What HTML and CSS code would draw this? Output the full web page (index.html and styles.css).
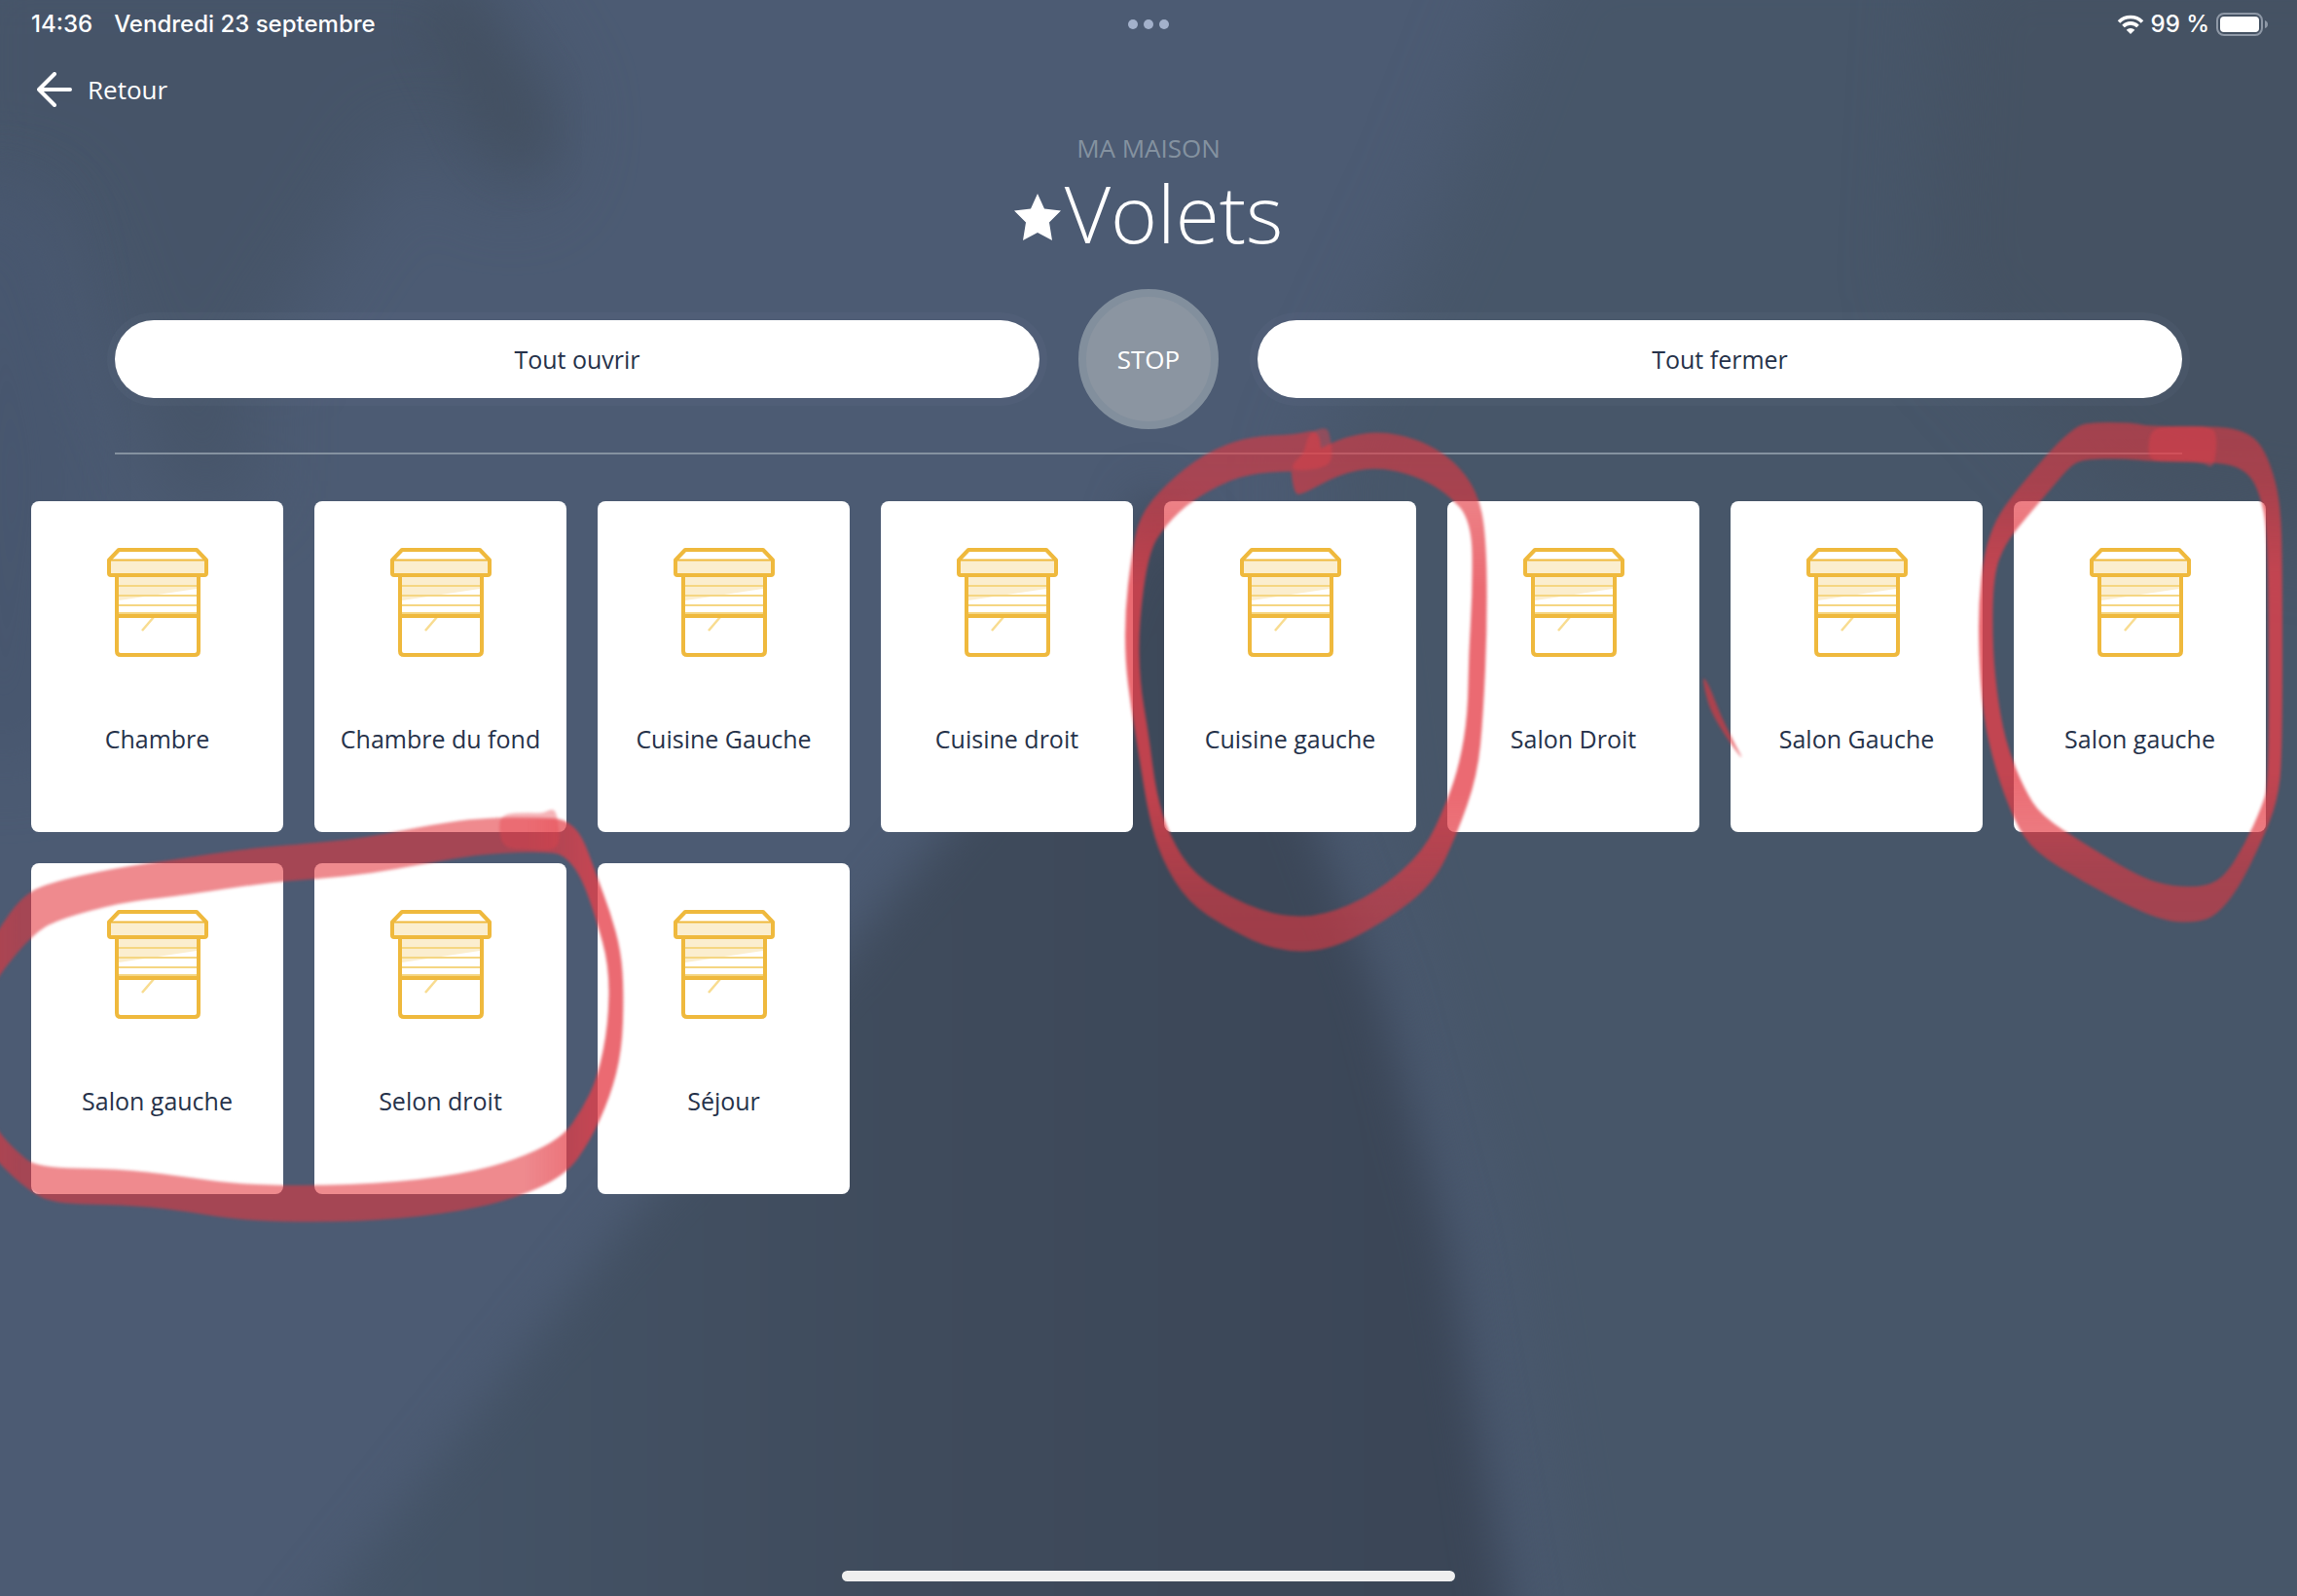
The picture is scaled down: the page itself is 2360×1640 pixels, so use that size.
FILE: index.html
```html
<!DOCTYPE html>
<html lang="fr">
<head>
    <meta charset="UTF-8">
    <meta name="viewport" content="width=device-width, initial-scale=1.0">
    <title>Volets</title>
    <link rel="stylesheet" href="styles.css">
</head>
<body>
<svg class="backdrop" viewBox="0 0 2360 1640" preserveAspectRatio="none" aria-hidden="true">
    <defs>
        <linearGradient id="bodyShade" x1="0" y1="0" x2="1" y2="0">
            <stop offset="0" stop-color="#46566a"/>
            <stop offset="0.5" stop-color="#3f4b5c"/>
            <stop offset="1" stop-color="#3a4556"/>
        </linearGradient>
        <filter id="soft" x="-20%" y="-20%" width="140%" height="140%" color-interpolation-filters="sRGB"><feGaussianBlur stdDeviation="24"/></filter>
        <filter id="softer" x="-30%" y="-30%" width="160%" height="160%" color-interpolation-filters="sRGB"><feGaussianBlur stdDeviation="40"/></filter>
    </defs>
    <rect width="2360" height="1640" fill="#4c5b73"/>
    <path d="M1590-80L2460-80V1720H1600L1520 1240 1400 860 1350 480 1480 200z" fill="#475669" filter="url(#softer)"/>
    <path d="M2000-60H2460V560L2180 520 1980 300z" fill="#455263" filter="url(#softer)"/>
    <path d="M-60-60H480L580 110 560 200 500 200 420 130 260 380 260 520 180 520 60 200 -60 180z" fill="#455366" opacity=".8" filter="url(#softer)"/>
    <path d="M470-20L560 100 570 160 540 180 500 150 430 10z" fill="#424e5e" opacity=".6" filter="url(#soft)"/>
    <path d="M-60 200H40L90 480 60 780H-60z" fill="#43526a" opacity=".5" filter="url(#softer)"/>
    <path d="M990 830L1130 640 1180 500 1280 620 1350 840 1420 1020 1490 1280 1560 1700H290L640 1260z" fill="url(#bodyShade)" filter="url(#soft)"/>
</svg>

<header class="status-bar">
    <div class="status-left">
        <span>14:36</span>
        <span>Vendredi 23 septembre</span>
    </div>
    <div class="dots"><i></i><i></i><i></i></div>
    <div class="status-right">
        <svg width="28" height="20" viewBox="0 0 28 20" aria-hidden="true">
            <path d="M2 7.500a17 17 0 0 1 24 0M6.500 12a10.600 10.600 0 0 1 15 0" fill="none" stroke="#fff" stroke-width="3.600"/>
            <path d="M14 20l-4.300-4.300a6 6 0 0 1 8.600 0z" fill="#fff"/>
        </svg>
        <span>99 %</span>
        <svg width="53" height="24" viewBox="0 0 53 24" aria-hidden="true">
            <rect x="1" y="1" width="46" height="22" rx="7" fill="none" stroke="#8e98a6" stroke-width="2"/>
            <rect x="4" y="4" width="40" height="16" rx="4" fill="#fff"/>
            <path d="M50 8q3 1 3 4t-3 4z" fill="#8e98a6"/>
        </svg>
    </div>
</header>

<nav class="nav">
    <a class="back" href="#">
        <svg width="36" height="36" viewBox="0 0 36 36" aria-hidden="true">
            <path d="M18 2L2 18l16 16M2 18h32" fill="none" stroke="#fff" stroke-width="4" stroke-linecap="round" stroke-linejoin="round"/>
        </svg>
        <span>Retour</span>
    </a>
</nav>

<div class="heading">
    <p>MA MAISON</p>
    <h1>
        <svg width="48" height="48" viewBox="0 0 48 48" aria-hidden="true">
            <path d="M24 0l7 15.500 17 2-12 12L39 48 24 40 9 48l3-18.500-12-12 17-2z" fill="#fff"/>
        </svg>
        <span>Volets</span>
    </h1>
</div>

<div class="controls">
    <button class="pill" type="button">Tout ouvrir</button>
    <button class="stop" type="button">STOP</button>
    <button class="pill" type="button">Tout fermer</button>
</div>

<!-- shutter icon shared by all cards -->
<svg class="sprite" aria-hidden="true">
    <symbol id="shutter" viewBox="0 0 104 112">
        <path d="M12 30h80v12L12 54z" fill="#fbeecf"/>
        <path d="M4 13h96v14H4z" fill="#fbeecf"/>
        <path d="M12 39h80M12 49h80M12 59h80M12 67h80" stroke="#f5d682" stroke-width="2"/>
        <path d="M48 71L36 85" stroke="#f8dc90" stroke-width="2.500"/>
        <path d="M4 12.500h96" stroke="#efb93d" stroke-width="2"/>
        <path d="M10 29v77q0 4 4 4h76q4 0 4-4V29M10 70h84M12 2h80l10 10.500V26q0 2-2 2H4q-2 0-2-2V12.500z" fill="none" stroke="#efb93d" stroke-width="4" stroke-linejoin="round"/>
    </symbol>
</svg>

<main class="cards">
    <button class="card" type="button"><svg><use href="#shutter"/></svg><span>Chambre</span></button>
    <button class="card" type="button"><svg><use href="#shutter"/></svg><span>Chambre du fond</span></button>
    <button class="card" type="button"><svg><use href="#shutter"/></svg><span>Cuisine Gauche</span></button>
    <button class="card" type="button"><svg><use href="#shutter"/></svg><span>Cuisine droit</span></button>
    <button class="card" type="button"><svg><use href="#shutter"/></svg><span>Cuisine gauche</span></button>
    <button class="card" type="button"><svg><use href="#shutter"/></svg><span>Salon Droit</span></button>
    <button class="card" type="button"><svg><use href="#shutter"/></svg><span>Salon Gauche</span></button>
    <button class="card" type="button"><svg><use href="#shutter"/></svg><span>Salon gauche</span></button>
    <button class="card" type="button"><svg><use href="#shutter"/></svg><span>Salon gauche</span></button>
    <button class="card" type="button"><svg><use href="#shutter"/></svg><span>Selon droit</span></button>
    <button class="card" type="button"><svg><use href="#shutter"/></svg><span>Séjour</span></button>
</main>

<div class="home-indicator"></div>

<!-- red marker, outlines are smoothed in script.js -->
<svg class="marker" viewBox="0 0 2360 1640" aria-hidden="true">
    <defs>
        <linearGradient id="inkV" x1="0" y1="0" x2="0" y2="1">
            <stop offset="0" stop-color="#e2373f" stop-opacity=".59"/>
            <stop offset=".12" stop-color="#e2373f" stop-opacity=".62"/>
            <stop offset=".3" stop-color="#e5404a" stop-opacity=".78"/>
            <stop offset=".7" stop-color="#e5404a" stop-opacity=".78"/>
            <stop offset=".9" stop-color="#e2373f" stop-opacity=".61"/>
            <stop offset="1" stop-color="#e2373f" stop-opacity=".59"/>
        </linearGradient>
        <linearGradient id="inkH" x1="0" y1="0" x2="1" y2="0">
            <stop offset="0" stop-color="#e2373f" stop-opacity=".7"/>
            <stop offset=".08" stop-color="#e2373f" stop-opacity=".59"/>
            <stop offset=".85" stop-color="#e2373f" stop-opacity=".59"/>
            <stop offset=".95" stop-color="#e5404a" stop-opacity=".78"/>
        </linearGradient>
        <filter id="edge" color-interpolation-filters="sRGB"><feGaussianBlur stdDeviation="1.500"/></filter>
    </defs>
    <g filter="url(#edge)">
        <path fill="url(#inkV)" data-points="1357,440 1330,447 1283,448 1237,466 1197,498 1170,531 1162,575 1156,627 1156,679 1162,727 1170,775 1180,838 1193,882 1220,927 1263,955 1310,977 1363,978 1423,947 1473,908 1497,857 1518,797 1524,734 1528,642 1527,549 1518,505 1493,472 1457,451 1417,443 1387,448 1368,455 1328,475 1326,482 1330,508 1338,508 1377,487 1413,480 1453,488 1487,507 1512,535 1513,605 1509,672 1508,734 1500,783 1487,823 1463,875 1413,918 1360,941 1317,942 1273,927 1227,899 1202,860 1188,816 1180,753 1171,701 1170,642 1180,568 1197,540 1227,512 1277,487 1330,484 1357,482"/>
        <path fill="#e5404a" fill-opacity=".45" data-points="1344,445 1360,439 1366,443 1370,474 1356,482 1328,484 1328,476 1340,466"/>
        <path fill="url(#inkV)" fill-rule="evenodd" data-points="2143,434 2190,434 2207,438 2273,438 2300,441 2320,452 2333,477 2343,516 2345,581 2345,777 2340,824 2323,866 2300,913 2277,941 2257,948 2227,947 2193,934 2140,906 2090,875 2070,845 2050,791 2037,734 2033,670 2033,620 2038,570 2050,534 2070,506 2110,459 2130,441|2140,472 2183,471 2207,474 2263,475 2293,477 2312,488 2322,509 2329,541 2331,634 2331,806 2323,831 2307,866 2287,899 2267,911 2233,911 2200,902 2143,868 2097,838 2080,811 2063,770 2053,724 2047,663 2048,591 2060,559 2080,534 2110,499 2127,479"/>
        <path fill="#e5404a" fill-opacity=".44" data-points="2212,439 2240,438 2270,438 2278,446 2276,474 2271,481 2264,475 2235,474 2208,474 2207,455"/>
        <path fill="url(#inkH)" data-points="-30,1000 0,953 21,923 46,908 118,892 181,883 252,872 337,865 379,860 446,847 497,840 560,840 581,842 598,858 612,897 627,937 638,977 641,1020 639,1080 627,1127 606,1173 581,1208 526,1233 455,1248 362,1256 252,1255 181,1243 126,1238 55,1237 29,1223 0,1197 -30,1160 -30,1120 0,1165 17,1183 38,1200 122,1201 181,1208 252,1218 362,1218 455,1210 522,1195 577,1170 598,1140 614,1107 625,1053 626,993 612,943 598,903 583,882 568,875 497,877 434,888 379,898 328,903 274,907 181,921 126,927 59,945 34,960 0,1000 -30,1050"/>
        <path fill="#e5404a" fill-opacity=".4" data-points="516,836 545,835 558,836 566,831 572,834 576,865 568,874 545,873 517,872 512,850"/>
        <path fill="#e2373f" fill-opacity=".65" data-points="1749,694 1756,704 1767,733 1780,760 1793,784 1775,760 1758,732 1752,712"/>
    </g>
</svg>
<script src="script.js"></script>
</body>
</html>
```
FILE: styles.css
```css
* {
    box-sizing: border-box;
}
body {
    margin: 0;
    min-height: 100vh;
    display: flex;
    flex-direction: column;
    position: relative;
    overflow-x: hidden;
    background: #4c5b73;
    color: #fff;
    font-family: "Open Sans", "Noto Sans", sans-serif;
    font-size: 26px;
    line-height: 36px;
}
button {
    font: inherit;
    border: none;
    padding: 0;
    cursor: pointer;
}
svg {
    display: block;
    flex: none;
}
.sprite {
    position: absolute;
    width: 0;
    height: 0;
}
.backdrop {
    position: absolute;
    top: 0;
    left: 0;
    width: 100%;
    height: 100%;
    z-index: -1;
}
.marker {
    position: absolute;
    top: 0;
    left: 0;
    width: 100%;
    pointer-events: none;
}

.status-bar {
    display: grid;
    grid-template-columns: 1fr auto 1fr;
    align-items: center;
    height: 50px;
    padding: 0 30px;
    font-family: Inter, sans-serif;
    font-size: 24px;
    font-weight: 500;
}
.status-left {
    display: flex;
    gap: 22px;
    padding-left: 2px;
}
.status-right {
    display: flex;
    justify-content: flex-end;
    align-items: center;
    gap: 7px;
}
.dots {
    display: flex;
    gap: 6px;
}
.dots i {
    width: 10px;
    height: 10px;
    border-radius: 50%;
    background: #a3b1cb;
}

.nav {
    padding: 24px 38px 0;
}
.back {
    display: inline-flex;
    align-items: center;
    gap: 16px;
    color: #fff;
    text-decoration: none;
}

.heading {
    display: flex;
    flex-direction: column;
    align-items: center;
    padding-top: 16px;
}
.heading p {
    margin: 0;
    color: #8492a0;
}
.heading h1 {
    display: flex;
    align-items: center;
    gap: 4px;
    margin: 0;
    font-size: 82px;
    font-weight: 300;
    line-height: 96px;
}
.heading h1 svg {
    margin-top: 10px;
}

.controls {
    display: flex;
    align-items: center;
    gap: 40px;
    margin: 31px 5% 0;
    padding-bottom: 24px;
    border-bottom: 2px solid #8592a0;
}
.pill {
    flex: 1;
    height: 80px;
    border-radius: 40px;
    background: #fff;
    color: #26324a;
    font-size: 25px;
    box-shadow: 0 0 0 8px rgba(132, 146, 160, 0.08);
}
.stop {
    width: 144px;
    height: 144px;
    border: 8px solid #828f9d;
    border-radius: 50%;
    background: #8b95a1;
    color: #fff;
}

.cards {
    display: grid;
    grid-template-columns: repeat(8, 1fr);
    gap: 32px;
    padding: 48px 32px 0;
}
.card {
    display: flex;
    flex-direction: column;
    align-items: center;
    height: 340px;
    padding-top: 48px;
    border-radius: 8px;
    background: #fff;
    color: #26324a;
    font-size: 25px;
    white-space: nowrap;
}
.card svg {
    width: 104px;
    height: 112px;
}
.card span {
    margin-top: 66px;
}

.home-indicator {
    width: 630px;
    height: 11px;
    margin: auto auto 15px;
    border-radius: 6px;
    background: #efefef;
}
```
FILE: script.js
```js
// turns each point list into a closed curve going through the middle of its segments
function smooth(list) {
    const pts = list.trim().split(' ').map(p => p.split(',').map(Number));
    const mid = (a, b) => ((a[0] + b[0]) / 2) + ' ' + ((a[1] + b[1]) / 2);
    let d = 'M' + mid(pts[pts.length - 1], pts[0]);
    pts.forEach((p, i) => {
        d += 'Q' + p[0] + ' ' + p[1] + ' ' + mid(p, pts[(i + 1) % pts.length]);
    });
    return d + 'Z';
}

document.querySelectorAll('.marker path').forEach(path => {
    path.setAttribute('d', path.dataset.points.split('|').map(smooth).join(''));
});
```
